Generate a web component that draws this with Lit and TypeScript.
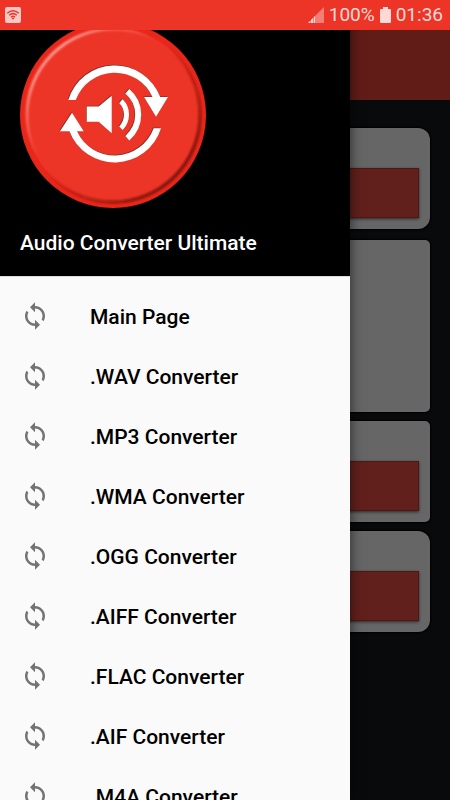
import { LitElement, html, css, svg } from "lit";
import { customElement, property } from "lit/decorators.js";

@customElement("status-bar")
class StatusBar extends LitElement {
  static styles = css`
    :host {
      display: flex;
      align-items: center;
      justify-content: space-between;
      box-sizing: border-box;
      height: 30px;
      padding: 0 7px 0 5px;
      background: #ec3527;
      color: #fdd9d5;
      font: 400 19px/30px Roboto, sans-serif;
    }
    svg {
      display: block;
    }
    .right {
      display: flex;
      align-items: center;
      gap: 5px;
    }
  `;

  render() {
    return html`
      <svg width="16" height="16" viewBox="0 0 16 16" role="img" aria-label="Wi-Fi">
        <rect width="16" height="16" rx="2" fill="#fbc9c5" />
        <g fill="none" stroke="#ec3527" stroke-width="1.5">
          <path d="M2.3 6.2Q8 1.2 13.7 6.2" />
          <path d="M4.2 8.3Q8 5 11.8 8.3" />
          <path d="M6 10.2Q8 8.4 10 10.2" />
        </g>
        <path d="M6.6 11.2Q8 10 9.4 11.2L8 12.8Z" fill="#ec3527" />
      </svg>
      <div class="right">
        <svg width="16" height="16" viewBox="0 0 16 16" role="img" aria-label="Signal">
          <path d="M0 16L16 0V16Z" fill="#f47d75" />
          <path d="M0 16L2 14V16ZM3 16V13L5 11V16ZM6 16V10L7 9V16Z" fill="#fdd9d5" />
        </svg>
        <span>100%</span>
        <svg width="11" height="16" viewBox="0 0 11 16" role="img" aria-label="Battery">
          <path d="M3 0H8V2H10Q11 2 11 3V15Q11 16 10 16H1Q0 16 0 15V3Q0 2 1 2H3Z" fill="#fdd9d5" />
        </svg>
        <span>01:36</span>
      </div>
    `;
  }
}

@customElement("app-logo")
class AppLogo extends LitElement {
  static styles = css`
    :host,
    svg {
      display: block;
    }
  `;

  render() {
    const glyph = svg`
      <path d="M48.3 78A48.5 48.5 0 0 1 140.2 75H148L136 94.7L124 75H132.5A41.5 41.5 0 0 0 55.7 78Z" />
      <path d="M141 106.3A48.5 48.5 0 0 1 49.4 109.3H40L52 90.7L63.7 109.3H57A41.5 41.5 0 0 0 133.7 106.3Z" />
      <path d="M66.7 84.5H78.7L91.7 73.7V111.3L78.7 99.8H66.7Z" />
      <path d="M102.6 77.3Q109 83.5 109 92.5Q109 101.5 102.6 108L99.2 104.5Q104 99 104 92.5Q104 86 99.2 81Z" />
      <path d="M109.3 67Q121.2 77 121.2 92.5Q121.2 108 109.3 118.5L105.3 114Q115.2 105 115.2 92.5Q115.2 80 105.3 71.5Z" />
    `;
    return html`
      <svg width="186" height="186" viewBox="0 0 186 186" role="img" aria-label="Audio Converter Ultimate logo">
        <defs>
          <linearGradient id="light" x1="0.1" y1="0.1" x2="0.6" y2="0.6">
            <stop offset="0" stop-color="#ffb3ab" />
            <stop offset="0.6" stop-color="#ff8a80" stop-opacity="0" />
          </linearGradient>
          <linearGradient id="dark" x1="0.9" y1="0.9" x2="0.35" y2="0.35">
            <stop offset="0" stop-color="#5a0d08" />
            <stop offset="0.8" stop-color="#7a1209" stop-opacity="0" />
          </linearGradient>
          <filter id="soft"><feGaussianBlur stdDeviation="1" /></filter>
          <filter id="edge"><feGaussianBlur stdDeviation="0.6" /></filter>
        </defs>
        <circle cx="93" cy="93" r="93" fill="#e8261a" />
        <circle cx="93" cy="93" r="87" fill="#ec3527" />
        <g fill="none" stroke-width="3" filter="url(#soft)">
          <circle cx="93" cy="93" r="86" stroke="url(#light)" />
          <circle cx="93" cy="93" r="87" stroke="url(#dark)" />
        </g>
        <g fill="#6d3028" opacity="0.8" filter="url(#edge)" transform="translate(-0.7 -0.7)">${glyph}</g>
        <g fill="#fff">${glyph}</g>
      </svg>
    `;
  }
}

@customElement("nav-drawer")
class NavDrawer extends LitElement {
  @property({ attribute: false }) items: string[] = [];

  static styles = css`
    :host {
      display: flex;
      flex-direction: column;
      overflow: hidden;
      background: #fafafa;
      font: 500 21px/30px Roboto, sans-serif;
      box-shadow: 0 0 12px rgba(0, 0, 0, 0.6);
    }
    header {
      display: grid;
      gap: 20px;
      padding: 22px 20px 18px;
      background: #000;
      color: #fff;
    }
    h1 {
      margin: 0;
      font: inherit;
    }
    nav {
      display: grid;
      padding: 10px 0;
      border-top: 1px solid #dcdcdc;
    }
    a {
      display: flex;
      align-items: center;
      gap: 40px;
      height: 60px;
      padding: 0 20px;
      color: #000;
      text-decoration: none;
    }
    svg {
      flex: none;
      padding-bottom: 2px;
      fill: #737373;
    }
  `;

  render() {
    return html`
      <header>
        <app-logo></app-logo>
        <h1>Audio Converter Ultimate</h1>
      </header>
      <nav>
        ${this.items.map(
          (item) => html`
            <a href="#">
              <svg width="30" height="30" viewBox="0 0 24 24" aria-hidden="true">
                <path
                  d="M12 4V1L8 5l4 4V6c3.31 0 6 2.69 6 6 0 1.01-.25 1.97-.7 2.8l1.46 1.46C19.54 15.03 20 13.57 20 12c0-4.42-3.58-8-8-8zm0 14c-3.31 0-6-2.69-6-6 0-1.01.25-1.97.7-2.8L5.24 7.74C4.46 8.97 4 10.43 4 12c0 4.42 3.58 8 8 8v3l4-4-4-4v3z"
                />
              </svg>
              <span>${item}</span>
            </a>
          `
        )}
      </nav>
    `;
  }
}

@customElement("app-root")
class AppRoot extends LitElement {
  private items = [
    "Main Page",
    ".WAV Converter",
    ".MP3 Converter",
    ".WMA Converter",
    ".OGG Converter",
    ".AIFF Converter",
    ".FLAC Converter",
    ".AIF Converter",
    ".M4A Converter",
  ];

  static styles = css`
    :host {
      display: block;
      position: relative;
      height: 100vh;
      overflow: hidden;
      background: #17191f;
    }
    status-bar {
      position: relative;
      z-index: 3;
    }
    .toolbar {
      height: 70px;
      background: #f2463e;
    }
    main {
      display: grid;
      gap: 9px;
      padding: 28px 20px;
    }
    .card {
      display: flex;
      flex-direction: column;
      justify-content: flex-end;
      box-sizing: border-box;
      min-height: 101px;
      padding: 11px;
      border-radius: 5px;
      background: #fff;
      box-shadow: 0 0 2px 1px #000;
    }
    .round {
      border-radius: 12px;
    }
    .first {
      margin-bottom: 2px;
    }
    .tall {
      min-height: 172px;
    }
    .action {
      height: 50px;
      border: 1px solid #c23a30;
      background: #f25248;
      box-shadow: 0 1px 3px rgba(0, 0, 0, 0.6);
    }
    .scrim {
      position: absolute;
      inset: 0;
      z-index: 1;
      background: rgba(0, 0, 0, 0.6);
    }
    nav-drawer {
      position: absolute;
      inset: 0 100px 0 0;
      z-index: 2;
    }
  `;

  render() {
    return html`
      <status-bar></status-bar>
      <div class="toolbar"></div>
      <main>
        <section class="card round first"><button class="action" aria-label="Select file"></button></section>
        <section class="card tall"></section>
        <section class="card"><button class="action" aria-label="Select format"></button></section>
        <section class="card round"><button class="action" aria-label="Convert"></button></section>
      </main>
      <div class="scrim"></div>
      <nav-drawer .items=${this.items}></nav-drawer>
    `;
  }
}
